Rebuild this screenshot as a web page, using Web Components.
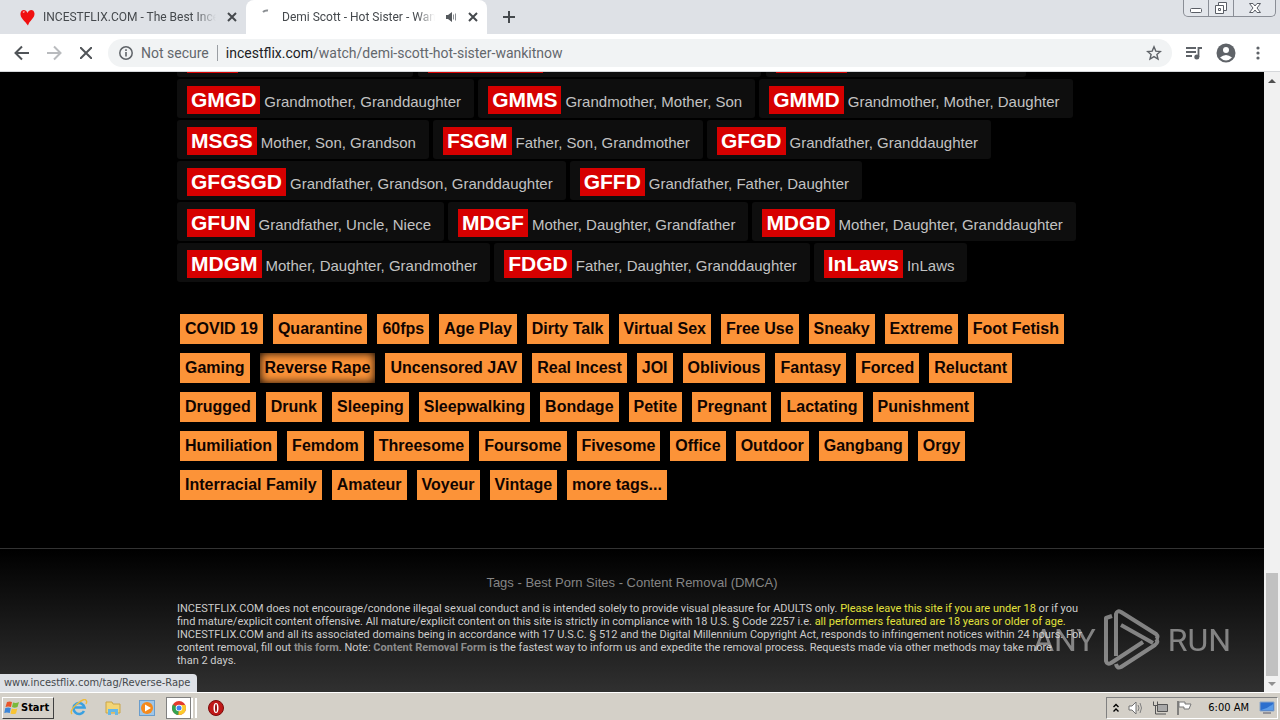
<!DOCTYPE html>
<html lang="en">
<head>
<meta charset="utf-8">
<title>Browser window</title>
<style>
html,body{margin:0;height:100%}
body{overflow:hidden;background:#000;font-family:"Liberation Sans",Arial,sans-serif}
</style>
</head>
<body>
<desktop-screen></desktop-screen>
<script>
const make=(name,html,after)=>{
  const t=document.createElement('template');
  t.innerHTML=html;
  customElements.define(name,class extends HTMLElement{
    constructor(){super();this.attachShadow({mode:'open'})}
    connectedCallback(){
      if(this.shadowRoot.childNodes.length)return;
      this.shadowRoot.append(t.content.cloneNode(true));
      if(after)after(this.shadowRoot,this);
    }
  });
};

make('window-controls',`<style>
:host{display:flex;align-self:start;height:17px;border:1px solid #8a8e96;border-top:0;border-radius:0 0 5px 5px;background:#e3e6eb;margin-right:4px;box-sizing:border-box}
button{all:unset;display:grid;place-items:center;width:25px;height:16px;box-sizing:border-box;border-right:1px solid #8a8e96}
button:last-child{width:41px;border:0}
svg{fill:#fff;stroke:#5a5e66;stroke-width:1}
</style>
<button aria-label="Minimize"><svg width="14" height="16"><rect x="1.5" y="8.500" width="11" height="4" rx="1"/></svg></button>
<button aria-label="Restore"><svg width="14" height="16"><path d="M4.500 2.500h8v8h-8z"/><path d="M1.500 5.500h8v8h-8zM4.500 8.500h2v2h-2z"/></svg></button>
<button aria-label="Close"><svg width="14" height="16"><path d="M1.500 3.500h3.500l2 2.500 2-2.500h3.500l-3.500 4.500 3.500 4.500h-3.500l-2-2.500-2 2.500H1.500l3.500-4.500z"/></svg></button>`);

make('tab-item',`<style>
:host{display:flex;align-items:center;height:34px;width:246px;box-sizing:border-box;padding:0 6px 0 20px;color:#45494d;font:12px/16px Roboto,"Open Sans",sans-serif}
:host([active]){background:#fff;border-radius:8px 8px 0 0;width:241px;padding-left:10px}
.t{flex:1;min-width:0;overflow:hidden;white-space:nowrap;margin:0 8px 0 8px;-webkit-mask-image:linear-gradient(90deg,#000 88%,transparent)}
button{all:unset;display:grid;place-items:center;width:16px;height:16px}
path{stroke:#45494d;stroke-width:2;fill:none}
</style><slot name="icon"></slot><span class="t"><slot></slot></span><slot name="audio"></slot><button aria-label="Close tab"><svg width="10" height="10"><path d="M1 1l8 8M9 1l-8 8"/></svg></button>`);

make('tab-strip',`<style>
:host{display:flex;height:34px;background:#dee1e6}
.new{all:unset;display:grid;place-items:center;width:28px;margin-left:8px}
.sp{flex:1}
</style>
<tab-item><svg slot="icon" width="15" height="17" viewBox="0 0 15 17"><path d="M7.500 4C6 0 1 0 .5 4.500 0 9 5 12 8 16.500 9 12 15 9 14.500 4.500 14 0 9 0 7.500 4z" fill="#f01010"/><path d="M3 3.500l1.500-1" stroke="#ffb0b0" stroke-width="1.500"/></svg>INCESTFLIX.COM - The Best Incest Porn</tab-item>
<tab-item active><svg slot="icon" width="18" height="16"><path d="M7 3q2-2 5-1.500" fill="none" stroke="#8a8e92" stroke-width="2"/></svg>Demi Scott - Hot Sister - WankItNow<svg slot="audio" width="22" height="12" viewBox="0 0 22 12"><path d="M3 4h2l4-3v10L5 8H3z" fill="#55595d"/><path d="M10.500 3.500v5M12.500 2.500v7" stroke="#8a8e92"/></svg></tab-item>
<button class="new" aria-label="New tab"><svg width="12" height="12"><path d="M6 0v12M0 6h12" stroke="#45494d" stroke-width="2"/></svg></button>
<span class="sp"></span><window-controls></window-controls>`);

make('tool-bar',`<style>
:host{display:flex;align-items:center;height:38px;box-sizing:border-box;background:#fff;border-bottom:1px solid #d5d7da;padding:0 6px}
button{all:unset;display:grid;place-items:center;width:32px;height:28px}
.addr{flex:1;display:flex;align-items:center;height:28px;border-radius:14px;background:#f1f3f4;margin-left:6px;margin-right:6px;padding-left:10px;font:14px/20px Roboto,"Open Sans",sans-serif;color:#63676c}
.ns{margin:0 8px 0 7px;white-space:nowrap}
.bar{width:1px;height:16px;background:#9a9ea3;margin-right:8px}
.url{flex:1}
b{font-weight:400;color:#202124}
.addr button{width:36px}
</style>
<button aria-label="Back"><svg width="16" height="16"><path d="M15 8H2M8 1.500L1.500 8 8 14.500" fill="none" stroke="#505458" stroke-width="2"/></svg></button>
<button aria-label="Forward"><svg width="16" height="16"><path d="M1 8h13M8 1.500L14.500 8 8 14.500" fill="none" stroke="#b9bbbe" stroke-width="2"/></svg></button>
<button aria-label="Stop"><svg width="12" height="12"><path d="M0 0l12 12M12 0L0 12" stroke="#505458" stroke-width="2"/></svg></button>
<div class="addr"><svg width="16" height="16"><circle cx="8" cy="8" r="6.200" fill="none" stroke="#5f6368" stroke-width="1.500"/><path d="M8 7v4.500M8 4.300v1.700" stroke="#5f6368" stroke-width="1.600"/></svg><span class="ns">Not secure</span><span class="bar"></span><span class="url"><b>incestflix.com</b>/watch/demi-scott-hot-sister-wankitnow</span>
<button aria-label="Bookmark"><svg width="16" height="16"><path d="M8 1.800l1.800 4.300 4.600.4-3.500 3 1.100 4.500L8 11.600 4 14l1.100-4.500-3.500-3 4.600-.4z" fill="none" stroke="#5f6368" stroke-width="1.400"/></svg></button></div>
<button aria-label="Media"><svg width="18" height="16"><path d="M1 3h10M1 7h10M1 11h6M13.500 12V3H17" fill="none" stroke="#5f6368" stroke-width="1.800"/><circle cx="11.800" cy="12" r="2.500" fill="#5f6368"/></svg></button>
<button aria-label="Profile"><svg width="20" height="20"><circle cx="10" cy="10" r="9.500" fill="#5f6368"/><circle cx="10" cy="7" r="3" fill="#fff"/><path d="M4 14.500q6-5 12 0-6 6-12 0z" fill="#fff"/></svg></button>
<button aria-label="Menu"><svg width="4" height="16"><g fill="#5f6368"><circle cx="2" cy="3" r="1.600"/><circle cx="2" cy="8" r="1.600"/><circle cx="2" cy="13" r="1.600"/></g></svg></button>`);

make('family-chip',`<style>
:host{display:block}
a{display:flex;align-items:baseline;box-sizing:border-box;height:39px;padding:7px 13px 4px 10px;background:#0e0e0e;border-radius:3px;color:#c2c2c2;text-decoration:none;font-size:15px;line-height:28px;white-space:nowrap}
b{background:#d60000;color:#fff;font-size:21px;line-height:28px;padding:0 4px;margin-right:4px}
</style><a href="#"><b></b><slot></slot></a>`,(r,h)=>{r.querySelector('b').textContent=h.getAttribute('code')});

make('tag-link',`<style>
:host{display:block}
a{display:block;background:#fc9338;color:#100400;font-size:16px;font-weight:700;line-height:30px;padding:0 5px;text-decoration:none;white-space:nowrap}
:host([hot]) a{box-shadow:inset 0 0 10px #000}
</style><a href="#"><slot></slot></a>`);

make('site-footer',`<style>
:host{display:block;border-top:1px solid #333;background:linear-gradient(#000,#303030);height:143px}
.in{width:910px;margin:0 auto}
nav{text-align:center;color:#858585;font-size:13px;line-height:18px;padding:25px 0 10px}
a{color:inherit;text-decoration:none}
p{margin:0;color:#ccc;font:11px/13px Roboto,"Open Sans",sans-serif}
p span{display:block;white-space:nowrap}
i{font-style:normal;color:#e2e23c}
p a{color:#8c8c8c;font-weight:700}
</style><div class="in"><nav><a href="#">Tags</a> - <a href="#">Best Porn Sites</a> - <a href="#">Content Removal (DMCA)</a></nav>
<p><span>INCESTFLIX.COM does not encourage/condone illegal sexual conduct and is intended solely to provide visual pleasure for ADULTS only. <i>Please leave this site if you are under 18</i> or if you</span><span>find mature/explicit content offensive. All mature/explicit content on this site is strictly in compliance with 18 U.S. § Code 2257 i.e. <i>all performers featured are 18 years or older of age.</i></span><span>INCESTFLIX.COM and all its associated domains being in accordance with 17 U.S.C. § 512 and the Digital Millennium Copyright Act, responds to infringement notices within 24 hours. For</span><span>content removal, fill out <a href="#">this form</a>. Note: <a href="#">Content Removal Form</a> is the fastest way to inform us and expedite the removal process. Requests made via other methods may take more</span><span>than 2 days.</span></p></div>`);

const families=[['GMGD','Grandmother, Granddaughter'],['GMMS','Grandmother, Mother, Son'],['GMMD','Grandmother, Mother, Daughter'],['MSGS','Mother, Son, Grandson'],['FSGM','Father, Son, Grandmother'],['GFGD','Grandfather, Granddaughter'],['GFGSGD','Grandfather, Grandson, Granddaughter'],['GFFD','Grandfather, Father, Daughter'],['GFUN','Grandfather, Uncle, Niece'],['MDGF','Mother, Daughter, Grandfather'],['MDGD','Mother, Daughter, Granddaughter'],['MDGM','Mother, Daughter, Grandmother'],['FDGD','Father, Daughter, Granddaughter'],['InLaws','InLaws']];
const tags='COVID 19|Quarantine|60fps|Age Play|Dirty Talk|Virtual Sex|Free Use|Sneaky|Extreme|Foot Fetish|Gaming|Reverse Rape|Uncensored JAV|Real Incest|JOI|Oblivious|Fantasy|Forced|Reluctant|Drugged|Drunk|Sleeping|Sleepwalking|Bondage|Petite|Pregnant|Lactating|Punishment|Humiliation|Femdom|Threesome|Foursome|Fivesome|Office|Outdoor|Gangbang|Orgy|Interracial Family|Amateur|Voyeur|Vintage|more tags...'.split('|');

make('site-page',`<style>
:host{display:flex;flex-direction:column;justify-content:flex-end;flex:1;min-width:0;background:#000;overflow:hidden}
.in{width:910px;margin:0 auto}
.cut{display:flex;gap:5px;margin-bottom:2px}
.cut div{width:236px;height:39px;box-sizing:border-box;background:#0e0e0e;padding:7px 0 4px 10px;border-radius:3px}
.cut div:nth-child(2){width:343px}.cut div:nth-child(3){width:260px}
.cut span{display:block;width:51px;height:28px;background:#d60000}
.cut div:nth-child(2) span{width:115px}.cut div:nth-child(3) span{width:71px}
.fam{display:flex;flex-wrap:wrap;gap:2px 4px}
.tags{display:flex;flex-wrap:wrap;gap:9px 10px;padding:32px 10px 48px 3px}
site-footer,.in{flex-shrink:0}
</style><div class="in"><div class="cut"><div><span></span></div><div><span></span></div><div><span></span></div></div><div class="fam"></div><div class="tags"></div></div><site-footer></site-footer>`,r=>{
  const add=(sel,tag,text,attr)=>{const e=document.createElement(tag);e.textContent=text;if(attr)e.setAttribute(...attr);r.querySelector(sel).append(e)};
  families.forEach(([c,t])=>add('.fam','family-chip',t,['code',c]));
  tags.forEach(t=>add('.tags','tag-link',t,t==='Reverse Rape'?['hot','']:null));
});

make('scroll-bar',`<style>
:host{display:flex;flex-direction:column;align-items:center;width:16px;background:#f1f1f1}
.thumb{width:12px;height:103px;margin-top:auto;background:#c1c1c1}
svg{display:block;margin:5px 0}
</style><svg width="8" height="8"><path d="M0 6l4-4 4 4z" fill="#505050"/></svg><div class="thumb"></div><svg width="8" height="6"><path d="M0 1h8l-4 4z" fill="#909090"/></svg>`);

make('sandbox-mark',`<style>
:host{display:flex;align-items:center;gap:8px;opacity:.55;color:#d8d8d8;font:32px/60px Roboto,"Liberation Sans",sans-serif}
</style><span>ANY</span><svg width="56" height="62" viewBox="0 0 56 62" fill="none" stroke="#d8d8d8" stroke-width="4" stroke-linejoin="round"><path d="M8 7L2 9v43q1 4 5 2l32-21"/><path d="M12 47V5q1-4 5-2l35 22q3 3 0 5M17 16l32 18"/><path d="M12 55q1 5 5 3l34-22q4-3 1-6"/></svg><span>RUN</span>`);

make('task-bar',`<style>
:host{display:flex;align-items:center;height:28px;box-sizing:border-box;background:#d4d0c8;border-top:1px solid #fff;padding:2px 2px 0;color:#000;font:11px/14px "DejaVu Sans Condensed","Open Sans",sans-serif}
.start{all:unset;display:flex;align-items:center;gap:1px;width:52px;height:22px;box-sizing:border-box;padding-left:1px;border:1px solid;border-color:#fff #404040 #404040 #fff;font:700 11px/16px "DejaVu Sans Condensed","Open Sans",sans-serif}
.q{display:flex;align-items:center;gap:16px;margin-left:16px}
.on{display:grid;place-items:center;width:25px;height:22px;box-sizing:border-box;background:#fff;border:1px solid #808080;margin:0 -4px 0 -6px}
.bars{width:2px;height:20px;border-left:2px solid #fff;border-right:2px solid #fff;margin:0 -6px 0 -12px}
.tray{display:flex;align-items:center;gap:8px;margin-left:auto;height:22px;box-sizing:border-box;border:1px solid;border-color:#808080 #fff #fff #808080;padding:0 2px 0 5px}
time{margin:0 2px 0 8px}
</style>
<button class="start"><svg width="16" height="16" viewBox="0 0 16 16"><path d="M3 2q3-1 5 0L7 7Q4 6 1.500 7z" fill="#e8552a"/><path d="M9 2.500q3 1 6-.5l-1.500 5q-3 1.500-5.500 0z" fill="#79b93b"/><path d="M1.300 8q3-1 5.500 0l-1 5q-3-1-5.500 0z" fill="#3d86d8"/><path d="M7.800 8.500q3 1 5.500 0L12 13.500q-3 1-5.500 0z" fill="#f8c433"/></svg>Start</button>
<div class="q">
<svg width="18" height="18" viewBox="0 0 18 18"><path d="M14 12a5.500 5.500 0 1 1 .5-3.500H5" fill="none" stroke="#3aa0e0" stroke-width="2.600"/><path d="M2 15Q-1 12 7 5t9.500-3Q17 3 16 5" fill="none" stroke="#eebb3c" stroke-width="1.400"/></svg>
<svg width="18" height="18" viewBox="0 0 18 18"><path d="M2 3h6l1 2h7v9H2z" fill="#f3d575" stroke="#c9a54b"/><path d="M4 16v-6h10v6h-3v-3H7v3z" fill="#66b8e6"/></svg>
<svg width="18" height="18" viewBox="0 0 18 18"><rect x="1.500" y="1.500" width="15" height="15" fill="#9fc6e8" stroke="#6a9dcc"/><circle cx="9" cy="9" r="6" fill="#f58a1c"/><path d="M7 5.500v7l6-3.500z" fill="#fff"/></svg>
<span class="on"><svg width="16" height="16" viewBox="0 0 16 16"><circle cx="8" cy="8" r="7" fill="#e33b2e"/><path d="M8 8L1.900 4.500A7 7 0 0 0 7.500 15z" fill="#34a350"/><path d="M8 8h0L7.500 15A7 7 0 0 0 14.300 5H8z" fill="#fbcb2c"/><circle cx="8" cy="8" r="3.300" fill="#fff"/><circle cx="8" cy="8" r="2.500" fill="#4285f4"/></svg></span><span class="bars"></span>
<svg width="18" height="18" viewBox="0 0 18 18"><circle cx="9" cy="9" r="7.500" fill="#c01818" stroke="#7b0c0c"/><ellipse cx="9" cy="9" rx="2.500" ry="5" fill="#fff"/><ellipse cx="9" cy="9" rx="1" ry="4" fill="#901010"/></svg>
</div>
<div class="tray">
<svg width="8" height="12"><path d="M1.500 5L4 2.500 6.500 5M1.500 9.500L4 7l2.500 2.500" fill="none" stroke="#000" stroke-width="1.400"/></svg>
<svg width="16" height="16" viewBox="0 0 16 16"><path d="M1 6h3l4-4v12L4 10H1z" fill="#fff" stroke="#707070"/><path d="M10 5q2 3 0 6M12 3q3 5 0 10" fill="none" stroke="#808080"/></svg>
<svg width="16" height="16" viewBox="0 0 16 16"><path d="M5.500 4.500h10v7h-10z" fill="#a8a8a8" stroke="#555"/><path d="M1.500 1.500v4h4v-4M3.500 6v8H14" fill="none" stroke="#555"/></svg>
<svg width="16" height="16" viewBox="0 0 16 16"><path d="M2 1v14" stroke="#666" stroke-width="1.500"/><path d="M3 2h6v2h6l-2 5H8V7H3z" fill="#fff" stroke="#777"/></svg>
<time>6:00 AM</time>
<svg width="16" height="14" viewBox="0 0 16 14"><path d="M1 1h14v9H1z" fill="#2c6fce" stroke="#8ba6c8"/><path d="M2 9q6-1 12-6v6z" fill="#5c9ce8"/><path d="M4 12h8" stroke="#556"/></svg>
</div>`);

make('desktop-screen',`<style>
:host{display:flex;flex-direction:column;height:100vh}
main{display:flex;flex:1;min-height:0;position:relative}
.status{position:absolute;left:0;bottom:0;background:#dee1e6;color:#45494d;border-radius:0 4px 0 0;padding:2px 7px 2px 4px;font:11px/14px "DejaVu Sans Condensed","Open Sans",sans-serif}
sandbox-mark{position:absolute;right:49px;bottom:21px}
</style><tab-strip></tab-strip><tool-bar></tool-bar><main><site-page></site-page><scroll-bar></scroll-bar><div class="status">www.incestflix.com/tag/Reverse-Rape</div><sandbox-mark></sandbox-mark></main><task-bar></task-bar>`);
</script>
</body>
</html>
